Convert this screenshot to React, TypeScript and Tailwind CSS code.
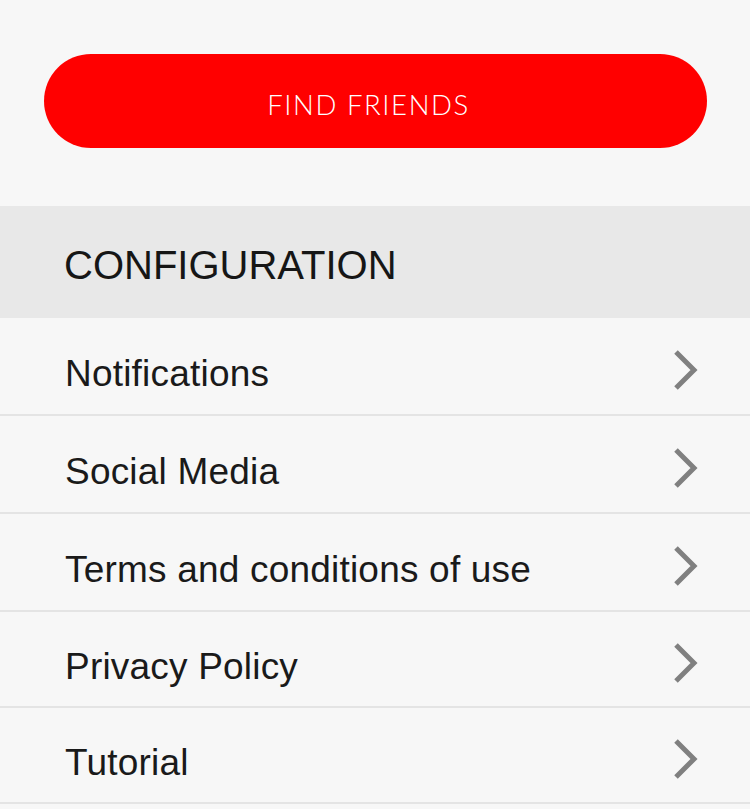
const rows = [
  { label: 'Notifications', h: 'h-[98px]' },
  { label: 'Social Media', h: 'h-[98px]' },
  { label: 'Terms and conditions of use', h: 'h-[98px]' },
  { label: 'Privacy Policy', h: 'h-[96px]' },
  { label: 'Tutorial', h: 'h-[96px]' },
];

function Chevron() {
  return (
    <svg width="25" height="42" viewBox="0 0 25 42" className="mt-[8px] shrink-0">
      <polyline
        points="3,3 21,21 3,39"
        fill="none"
        stroke="#808080"
        strokeWidth="5"
      />
    </svg>
  );
}

export default function App() {
  return (
    <div className="min-h-[809px] w-[750px] bg-[#f7f7f7]">
      {/* Find friends */}
      <div className="pt-[54px] pb-[58px] pl-[44px] pr-[43px]">
        <button className="flex h-[94px] w-full items-center justify-center rounded-full bg-[#ff0000] pt-[8px] pr-[14px] font-['Lato',sans-serif] text-[27.5px] font-light tracking-[1.6px] text-white">
          FIND FRIENDS
        </button>
      </div>

      {/* Section header */}
      <div className="flex h-[112px] items-center bg-[#e8e8e8] pt-[6px] pl-[64px] font-['Liberation_Sans',Arial,sans-serif] text-[40px] text-[#161616]">
        CONFIGURATION
      </div>

      {/* Rows */}
      <div className="font-['Liberation_Sans',Arial,sans-serif]">
        {rows.map((r) => (
          <div
            key={r.label}
            className={`flex ${r.h} items-center justify-between border-b-2 border-[#e4e4e4] pl-[65px] pr-[52px]`}
          >
            <span className="pt-[16px] text-[37px] tracking-[0.2px] text-[#1a1a1a]">{r.label}</span>
            <Chevron />
          </div>
        ))}
      </div>
    </div>
  );
}
